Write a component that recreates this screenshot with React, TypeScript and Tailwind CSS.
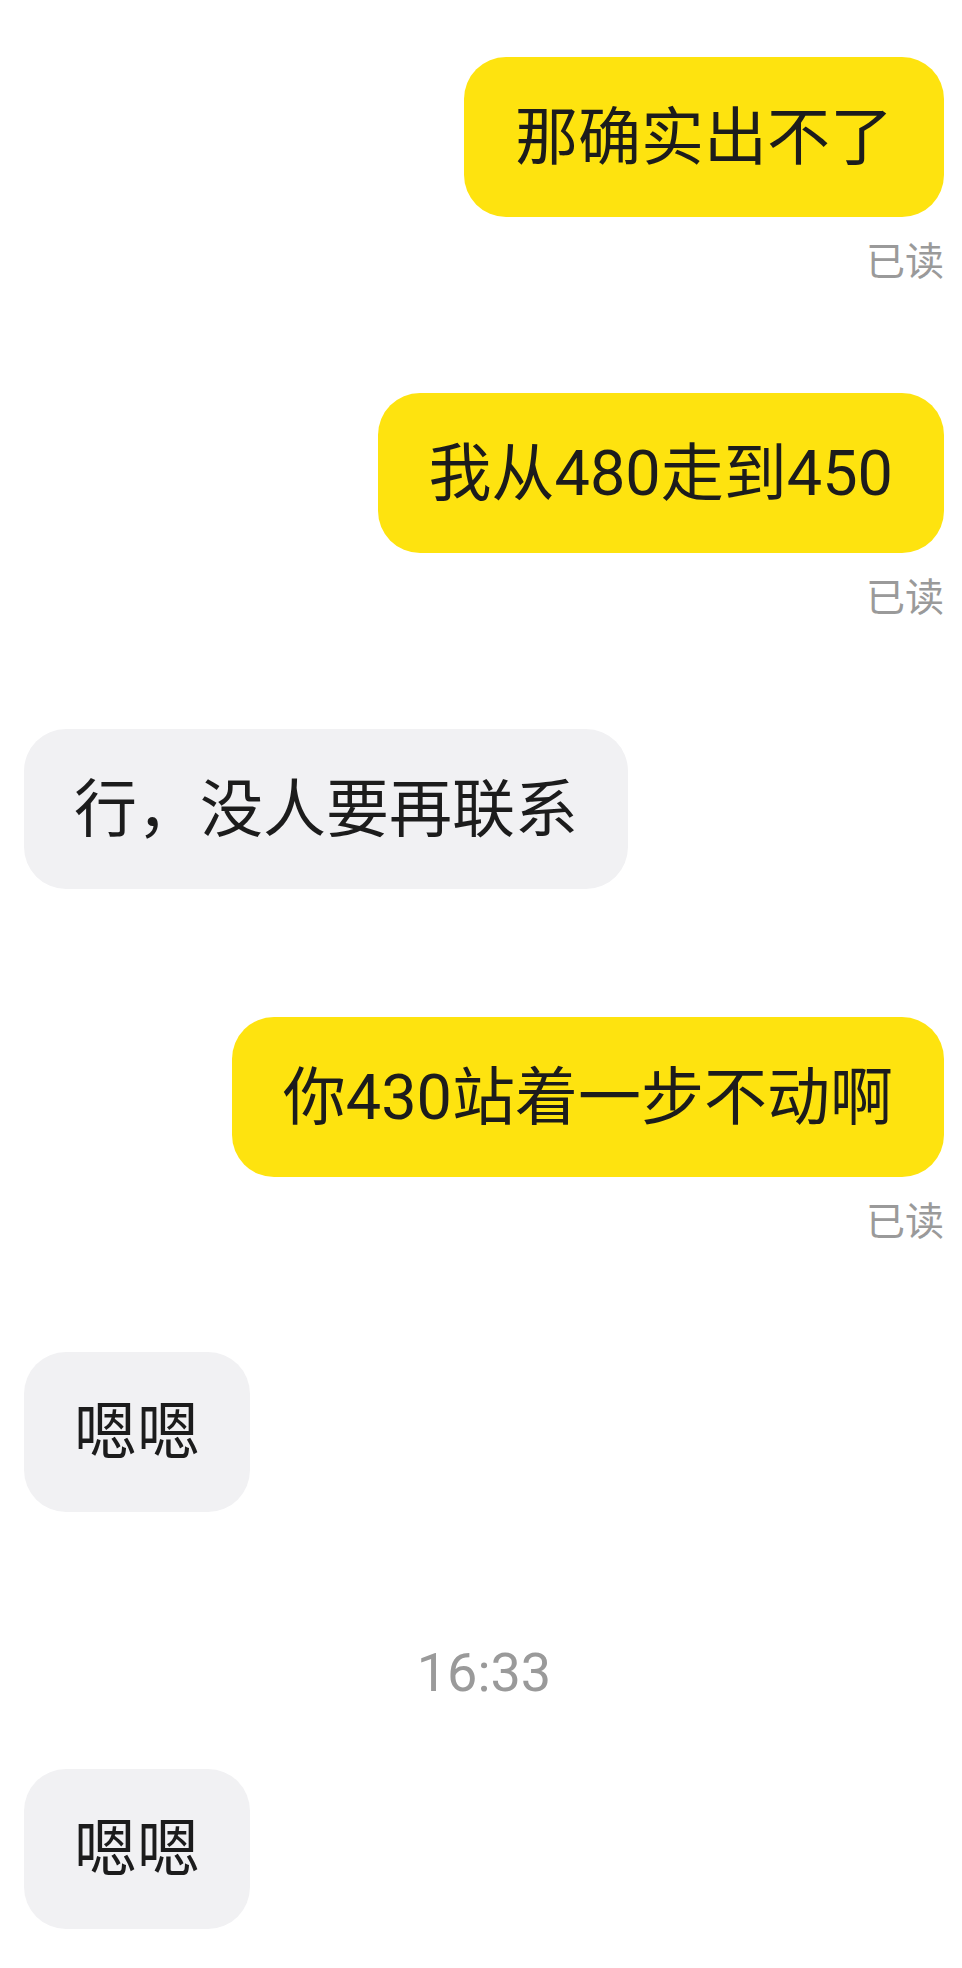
import React from "react";

const font = { fontFamily: 'Roboto, "Noto Sans CJK SC", sans-serif' };

function Mine({ text, className = "" }: { text: string; className?: string }) {
  return (
    <div className={`flex flex-col items-end ${className}`}>
      <div className="h-[160px] flex items-center rounded-[42px] bg-[#FEE30F] px-[51px] text-[63px] leading-none text-[#1c1c1c]">
        <span>{text}</span>
      </div>
      <div className="mt-[26px] text-[39px] leading-[39px] text-[#9a9a9a]">已读</div>
    </div>
  );
}

function Theirs({ text, className = "" }: { text: string; className?: string }) {
  return (
    <div className={`flex ${className}`}>
      <div className="h-[160px] flex items-center rounded-[42px] bg-[#F1F1F3] px-[50px] text-[63px] leading-none text-[#1c1c1c]">
        <span>{text}</span>
      </div>
    </div>
  );
}

export default function App() {
  return (
    <div className="w-[962px] h-[1968px] bg-white pl-[24px] pr-[18px] pt-[57px] flex flex-col" style={font}>
      <Mine text="那确实出不了" />
      <Mine text="我从480走到450" className="mt-[111px]" />
      <Theirs text="行，没人要再联系" className="mt-[111px]" />
      <Mine text="你430站着一步不动啊" className="mt-[128px]" />
      <Theirs text="嗯嗯" className="mt-[110px]" />
      <div className="mt-[134px] text-center text-[54px] leading-[54px] text-[#9a9a9a]">16:33</div>
      <Theirs text="嗯嗯" className="mt-[69px]" />
    </div>
  );
}
